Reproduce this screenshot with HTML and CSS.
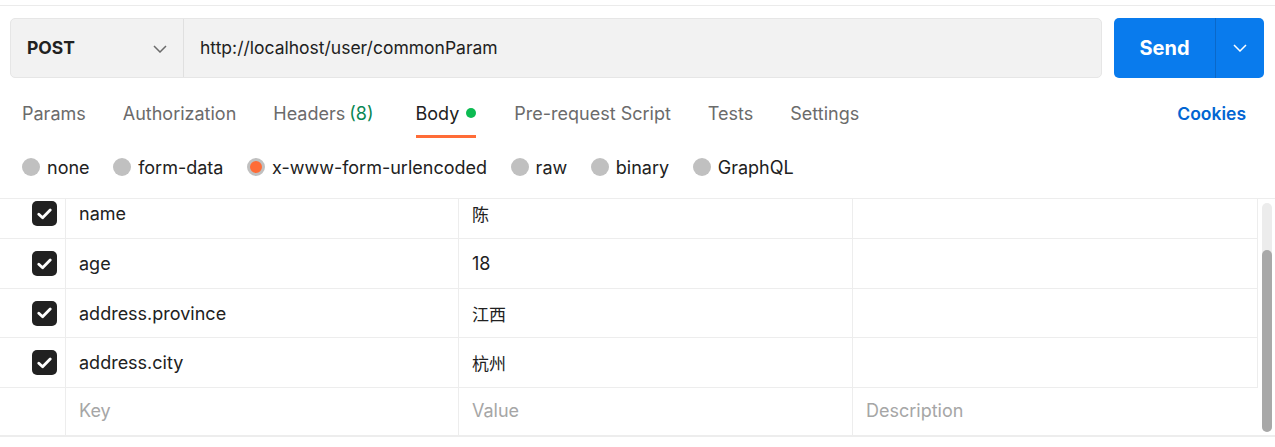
FILE: index.html
```html
<!DOCTYPE html>
<html lang="en">
<head>
<meta charset="utf-8">
<title>Request</title>
<link rel="stylesheet" href="styles.css">
</head>
<body>
<div class="topline"></div>
<div class="request-row">
  <div class="url-bar">
    <div class="method">
      <span class="method-name">POST</span>
      <svg class="chev" width="14" height="8" viewBox="0 0 14 8"><path d="M1 1 L7 7 L13 1" fill="none" stroke="#6b6b6b" stroke-width="1.5"/></svg>
    </div>
    <div class="url">http://localhost/user/commonParam</div>
  </div>
  <div class="send">
    <div class="send-main">Send</div>
    <div class="send-drop">
      <svg width="14" height="8" viewBox="0 0 14 8"><path d="M1 1 L7 7 L13 1" fill="none" stroke="#ffffff" stroke-width="1.5"/></svg>
    </div>
  </div>
</div>

<div class="tabs">
  <div class="tab-list">
    <div class="tab">Params</div>
    <div class="tab">Authorization</div>
    <div class="tab headers">Headers <span class="count">(8)</span></div>
    <div class="tab active">Body <span class="dot"></span></div>
    <div class="tab">Pre-request Script</div>
    <div class="tab">Tests</div>
    <div class="tab">Settings</div>
  </div>
  <div class="cookies">Cookies</div>
</div>

<div class="radios">
  <div class="radio"><span class="circle"></span>none</div>
  <div class="radio"><span class="circle"></span>form-data</div>
  <div class="radio"><span class="circle selected"></span>x-www-form-urlencoded</div>
  <div class="radio"><span class="circle"></span>raw</div>
  <div class="radio"><span class="circle"></span>binary</div>
  <div class="radio"><span class="circle"></span>GraphQL</div>
</div>

<div class="table-wrap">
  <div class="table-view">
    <div class="grid">
      <div class="row">
        <div class="cell check"><span class="cb"><svg width="15" height="12" viewBox="0 0 15 12"><path d="M1.8 6.2 L5.6 9.8 L13.2 2" fill="none" stroke="#fff" stroke-width="2.8" stroke-linecap="round" stroke-linejoin="round"/></svg></span></div>
        <div class="cell">name</div>
        <div class="cell cjk">陈</div>
        <div class="cell"></div>
      </div>
      <div class="row">
        <div class="cell check"><span class="cb"><svg width="15" height="12" viewBox="0 0 15 12"><path d="M1.8 6.2 L5.6 9.8 L13.2 2" fill="none" stroke="#fff" stroke-width="2.8" stroke-linecap="round" stroke-linejoin="round"/></svg></span></div>
        <div class="cell">age</div>
        <div class="cell">18</div>
        <div class="cell"></div>
      </div>
      <div class="row short">
        <div class="cell check"><span class="cb"><svg width="15" height="12" viewBox="0 0 15 12"><path d="M1.8 6.2 L5.6 9.8 L13.2 2" fill="none" stroke="#fff" stroke-width="2.8" stroke-linecap="round" stroke-linejoin="round"/></svg></span></div>
        <div class="cell">address.province</div>
        <div class="cell cjk">江西</div>
        <div class="cell"></div>
      </div>
      <div class="row">
        <div class="cell check"><span class="cb"><svg width="15" height="12" viewBox="0 0 15 12"><path d="M1.8 6.2 L5.6 9.8 L13.2 2" fill="none" stroke="#fff" stroke-width="2.8" stroke-linecap="round" stroke-linejoin="round"/></svg></span></div>
        <div class="cell">address.city</div>
        <div class="cell cjk">杭州</div>
        <div class="cell"></div>
      </div>
      <div class="row new">
        <div class="cell check"></div>
        <div class="cell ph">Key</div>
        <div class="cell ph">Value</div>
        <div class="cell ph last">Description</div>
      </div>
    </div>
  </div>
  <div class="scroll-col">
    <div class="track"><div class="thumb"></div></div>
  </div>
</div>
</body>
</html>
```

FILE: styles.css
```css
* { box-sizing: border-box; }
html, body { margin: 0; padding: 0; background: #ffffff; }
body {
  font-family: Inter, "Noto Sans", "Noto Sans CJK SC", sans-serif;
  font-size: 18px;
  color: #212121;
  width: 1275px;
  height: 447px;
  overflow: hidden;
}
.topline {
  height: 6px;
  border-bottom: 1px solid #ebebeb;
}
.request-row {
  display: flex;
  gap: 12px;
  padding: 0 11px 0 10px;
  margin-top: 12px;
  height: 60px;
}
.url-bar {
  flex: 1;
  display: flex;
  background: #f2f2f2;
  border: 1px solid #e6e6e6;
  border-radius: 5px;
  padding-bottom: 2px;
}
.method {
  width: 173px;
  display: flex;
  align-items: center;
  justify-content: space-between;
  padding: 0 16px 0 16px;
  border-right: 1px solid #e0e0e0;
  margin-bottom: -2px;
}
.method-name { font-weight: 700; font-size: 17.5px; padding-bottom: 2px; }
.chev { margin-top: 1px; }
.url {
  display: flex;
  align-items: center;
  padding-left: 16px;
  font-size: 17.5px;
}
.send {
  width: 150px;
  display: flex;
  background: #097bed;
  border-radius: 5px;
  color: #fff;
}
.send-main {
  width: 101px;
  display: flex;
  align-items: center;
  justify-content: center;
  font-weight: 700;
  font-size: 20px;
  padding-bottom: 1px;
}
.send-drop {
  flex: 1;
  display: flex;
  align-items: center;
  justify-content: center;
  border-left: 1px solid #0a68c9;
}
.tabs {
  display: flex;
  justify-content: space-between;
  align-items: stretch;
  height: 48px;
  margin-top: 12px;
  padding: 0 29px 0 22px;
}
.tab-list {
  display: flex;
  gap: 37px;
}
.tab {
  display: flex;
  align-items: center;
  gap: 7px;
  color: #6b6b6b;
  border-bottom: 3px solid transparent;
  padding-top: 1px;
  white-space: nowrap;
}
.tab .count { color: #0a8754; margin-left: -3px; }
.tab.headers { margin-right: 5px; }
.tab.active {
  color: #212121;
  border-bottom-color: #ff6c37;
}
.tab.active + .tab { margin-left: 1px; }
.dot {
  width: 10px;
  height: 10px;
  border-radius: 50%;
  background: #0cbb52;
}
.cookies {
  display: flex;
  align-items: center;
  color: #0265d2;
  font-weight: 600;
  font-size: 17.5px;
  padding-bottom: 2px;
}
.radios {
  display: flex;
  align-items: center;
  gap: 23.6px;
  height: 60px;
  padding-left: 22px;
  padding-bottom: 2px;
}
.radio {
  display: flex;
  align-items: center;
  gap: 7px;
  white-space: nowrap;
}
.circle {
  width: 18px;
  height: 18px;
  border-radius: 50%;
  background: #c0c0c0;
}
.circle.selected {
  background: #ff6c37;
  border: 3px solid #c0c0c0;
}
.table-wrap {
  display: flex;
  border-top: 1px solid #ededed;
  border-bottom: 2px solid #ededed;
  height: 239px;
}
.table-view {
  width: 1258px;
  overflow: hidden;
}
.grid {
  margin-top: -10px;
}
.row {
  display: grid;
  grid-template-columns: 66px 393px 394px 405px;
  height: 50px;
  border-bottom: 1px solid #ededed;
}
.row.short { height: 49px; }
.row.new { height: 47px; border-bottom: none; }
.cell {
  display: flex;
  align-items: center;
  padding-left: 13px;
  border-right: 1px solid #ededed;
  white-space: nowrap;
}
.cell.cjk { font-family: "Noto Sans CJK SC", sans-serif; font-size: 17px; }
.cell.check {
  justify-content: flex-end;
  padding: 0 8px 0 0;
}
.cell.ph { color: #a6a6a6; padding-bottom: 3px; }
.cell.last { border-right-color: transparent; }
.cb {
  width: 25px;
  height: 25px;
  border-radius: 5px;
  background: #212121;
  display: flex;
  align-items: center;
  justify-content: center;
}
.scroll-col {
  flex: 1;
  padding: 4px 3px 0 4px;
}
.track {
  width: 10px;
  height: 229px;
  border-radius: 5px;
  background: #ececec;
  display: flex;
  flex-direction: column;
  justify-content: flex-end;
}
.thumb {
  height: 182px;
  border-radius: 5px;
  background: #a8a8a8;
}
```
